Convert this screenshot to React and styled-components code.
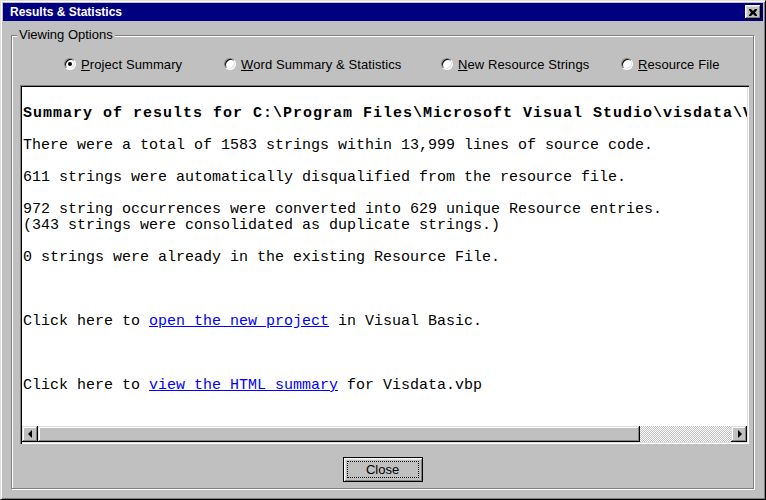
import React from "react";
import styled, { createGlobalStyle } from "styled-components";

const Global = createGlobalStyle`
  html, body { margin: 0; padding: 0; background: #c0c0c0; overflow: hidden; }
  #root { width: 766px; height: 500px; }
`;

const Window = styled.div`
  width: 766px;
  height: 500px;
  box-sizing: border-box;
  background: #c0c0c0;
  border: 1px solid;
  border-color: #dfdfdf #000 #000 #dfdfdf;
  box-shadow: inset 1px 1px #fff, inset -1px -1px #808080;
  padding: 2px;
  display: flex;
  flex-direction: column;
  font-family: "Liberation Sans", Arial, sans-serif;
`;

const TitleBar = styled.div`
  height: 18px;
  flex: none;
  background: #000080;
  color: #fff;
  font-weight: bold;
  font-size: 12px;
  display: flex;
  align-items: center;
  justify-content: space-between;
  padding: 0 2px 0 7px;
`;

const TitleBtn = styled.div`
  width: 16px;
  height: 14px;
  box-sizing: border-box;
  background: #c0c0c0;
  box-shadow: inset -1px -1px #000, inset 1px 1px #fff, inset -2px -2px #808080, inset 2px 2px #dfdfdf;
  display: flex;
  align-items: center;
  justify-content: center;
`;

const Body = styled.div`
  flex: 1;
  display: flex;
  padding: 14px 9px 8px 8px;
  min-height: 0;
`;

const Group = styled.div`
  position: relative;
  flex: 1;
  border: 1px solid #808080;
  box-shadow: inset 1px 1px #fff, 1px 1px #fff;
  display: flex;
  flex-direction: column;
  padding: 20px 4px 6px 8px;
  min-width: 0;
`;

const GroupLabel = styled.span`
  position: absolute;
  top: -9px;
  left: 5px;
  padding: 0 2px;
  background: #c0c0c0;
  font-size: 13px;
  line-height: 16px;
  color: #000;
`;

const RadioRow = styled.div`
  height: 16px;
  display: flex;
  align-items: center;
  padding-left: 44px;
  flex: none;
`;

const Option = styled.label`
  width: ${(p) => p.$w}px;
  flex: none;
  display: flex;
  align-items: center;
  gap: 5px;
  font-size: 13px;
  letter-spacing: 0.1px;
  color: #000;
  white-space: nowrap;
`;

const RadioCircle = styled.span`
  width: 12px;
  height: 12px;
  box-sizing: border-box;
  border-radius: 50%;
  background: #fff;
  border: 1px solid;
  border-color: #808080 #fff #fff #808080;
  box-shadow: inset 1px 1px #000, inset -1px -1px #dfdfdf;
  display: flex;
  align-items: center;
  justify-content: center;
  flex: none;
  &::after {
    content: "";
    width: 4px;
    height: 4px;
    border-radius: 50%;
    background: ${(p) => (p.$checked ? "#000" : "transparent")};
  }
`;

const Key = styled.span`
  text-decoration: underline;
`;

const TextBox = styled.div`
  margin-top: 13px;
  flex: 1;
  min-height: 0;
  display: flex;
  flex-direction: column;
  padding: 2px;
  background: #fff;
  box-shadow: inset 1px 1px #808080, inset 2px 2px #000, inset -1px -1px #fff, inset -2px -2px #dfdfdf;
`;

const Content = styled.div`
  flex: 1;
  min-height: 0;
  overflow: hidden;
  padding: 19px 0 0 1px;
  font-family: "Liberation Mono", "Courier New", monospace;
  font-size: 15px;
  line-height: 16px;
  color: #000;
`;

const Line = styled.div`
  white-space: pre;
  height: ${(p) => (p.$gap ? p.$gap * 16 : 16)}px;
  font-weight: ${(p) => (p.$bold ? "bold" : "normal")};
  letter-spacing: ${(p) => (p.$bold ? "1px" : "0")};
`;

const Link = styled.a`
  color: #0000ff;
  text-decoration: underline;
  cursor: pointer;
`;

const ScrollBar = styled.div`
  height: 16px;
  flex: none;
  display: flex;
`;

const ArrowBtn = styled.div`
  width: 16px;
  height: 16px;
  box-sizing: border-box;
  flex: none;
  background: #c0c0c0;
  box-shadow: inset -1px -1px #000, inset 1px 1px #dfdfdf, inset -2px -2px #808080, inset 2px 2px #fff;
  display: flex;
  align-items: center;
  justify-content: center;
  &::after {
    content: "";
    width: 0;
    height: 0;
    border-top: 4px solid transparent;
    border-bottom: 4px solid transparent;
    ${(p) => (p.$dir === "left" ? "border-right: 4px solid #000; margin-left:-1px;" : "border-left: 4px solid #000; margin-left:1px;")}
  }
`;

const Thumb = styled.div`
  width: 602px;
  height: 16px;
  box-sizing: border-box;
  flex: none;
  background: #c0c0c0;
  box-shadow: inset -1px -1px #000, inset 1px 1px #dfdfdf, inset -2px -2px #808080, inset 2px 2px #fff;
`;

const Track = styled.div`
  flex: 1;
  background: repeating-conic-gradient(#c0c0c0 0 25%, #fff 0 50%) 0 0 / 2px 2px;
`;

const ButtonRow = styled.div`
  flex: none;
  display: flex;
  justify-content: center;
  margin-top: 13px;
  padding-right: 4px;
`;

const Button = styled.button`
  width: 80px;
  height: 25px;
  box-sizing: border-box;
  background: #c0c0c0;
  border: 1px solid #000;
  box-shadow: inset 1px 1px #fff, inset -1px -1px #808080, inset 2px 2px #dfdfdf;
  font-family: "Liberation Sans", Arial, sans-serif;
  font-size: 13px;
  color: #000;
  padding: 3px;
  display: flex;
  margin: 0;
`;

const Focus = styled.span`
  flex: 1;
  border: 1px dotted #000;
  display: flex;
  align-items: center;
  justify-content: center;
`;

const options = [
  { key: "P", rest: "roject Summary", w: 160, checked: true },
  { key: "W", rest: "ord Summary & Statistics", w: 217 },
  { key: "N", rest: "ew Resource Strings", w: 180 },
  { key: "R", rest: "esource File", w: 140 },
];

export default function App() {
  return (
    <>
      <Global />
      <Window>
        <TitleBar>
          <span>Results &amp; Statistics</span>
          <TitleBtn>
            <svg width="8" height="7" viewBox="0 0 8 7">
              <path d="M0 0h2l2 2 2-2h2v1L6 3.5 8 6v1H6L4 5 2 7H0V6l2-2.5L0 1z" fill="#000" />
            </svg>
          </TitleBtn>
        </TitleBar>
        <Body>
          <Group>
            <GroupLabel>Viewing Options</GroupLabel>
            <RadioRow>
              {options.map((o) => (
                <Option key={o.key} $w={o.w}>
                  <RadioCircle $checked={o.checked} />
                  <span>
                    <Key>{o.key}</Key>
                    {o.rest}
                  </span>
                </Option>
              ))}
            </RadioRow>
            <TextBox>
              <Content>
                <Line $bold $gap={2}>{"Summary of results for C:\\Program Files\\Microsoft Visual Studio\\visdata\\Visdata.vbp"}</Line>
                <Line $gap={2}>There were a total of 1583 strings within 13,999 lines of source code.</Line>
                <Line $gap={2}>611 strings were automatically disqualified from the resource file.</Line>
                <Line>972 string occurrences were converted into 629 unique Resource entries.</Line>
                <Line $gap={2}>(343 strings were consolidated as duplicate strings.)</Line>
                <Line $gap={4}>0 strings were already in the existing Resource File.</Line>
                <Line $gap={4}>
                  {"Click here to "}
                  <Link>open the new project</Link>
                  {" in Visual Basic."}
                </Line>
                <Line>
                  {"Click here to "}
                  <Link>view the HTML summary</Link>
                  {" for Visdata.vbp"}
                </Line>
              </Content>
              <ScrollBar>
                <ArrowBtn $dir="left" />
                <Thumb />
                <Track />
                <ArrowBtn $dir="right" />
              </ScrollBar>
            </TextBox>
            <ButtonRow>
              <Button>
                <Focus>Close</Focus>
              </Button>
            </ButtonRow>
          </Group>
        </Body>
      </Window>
    </>
  );
}
